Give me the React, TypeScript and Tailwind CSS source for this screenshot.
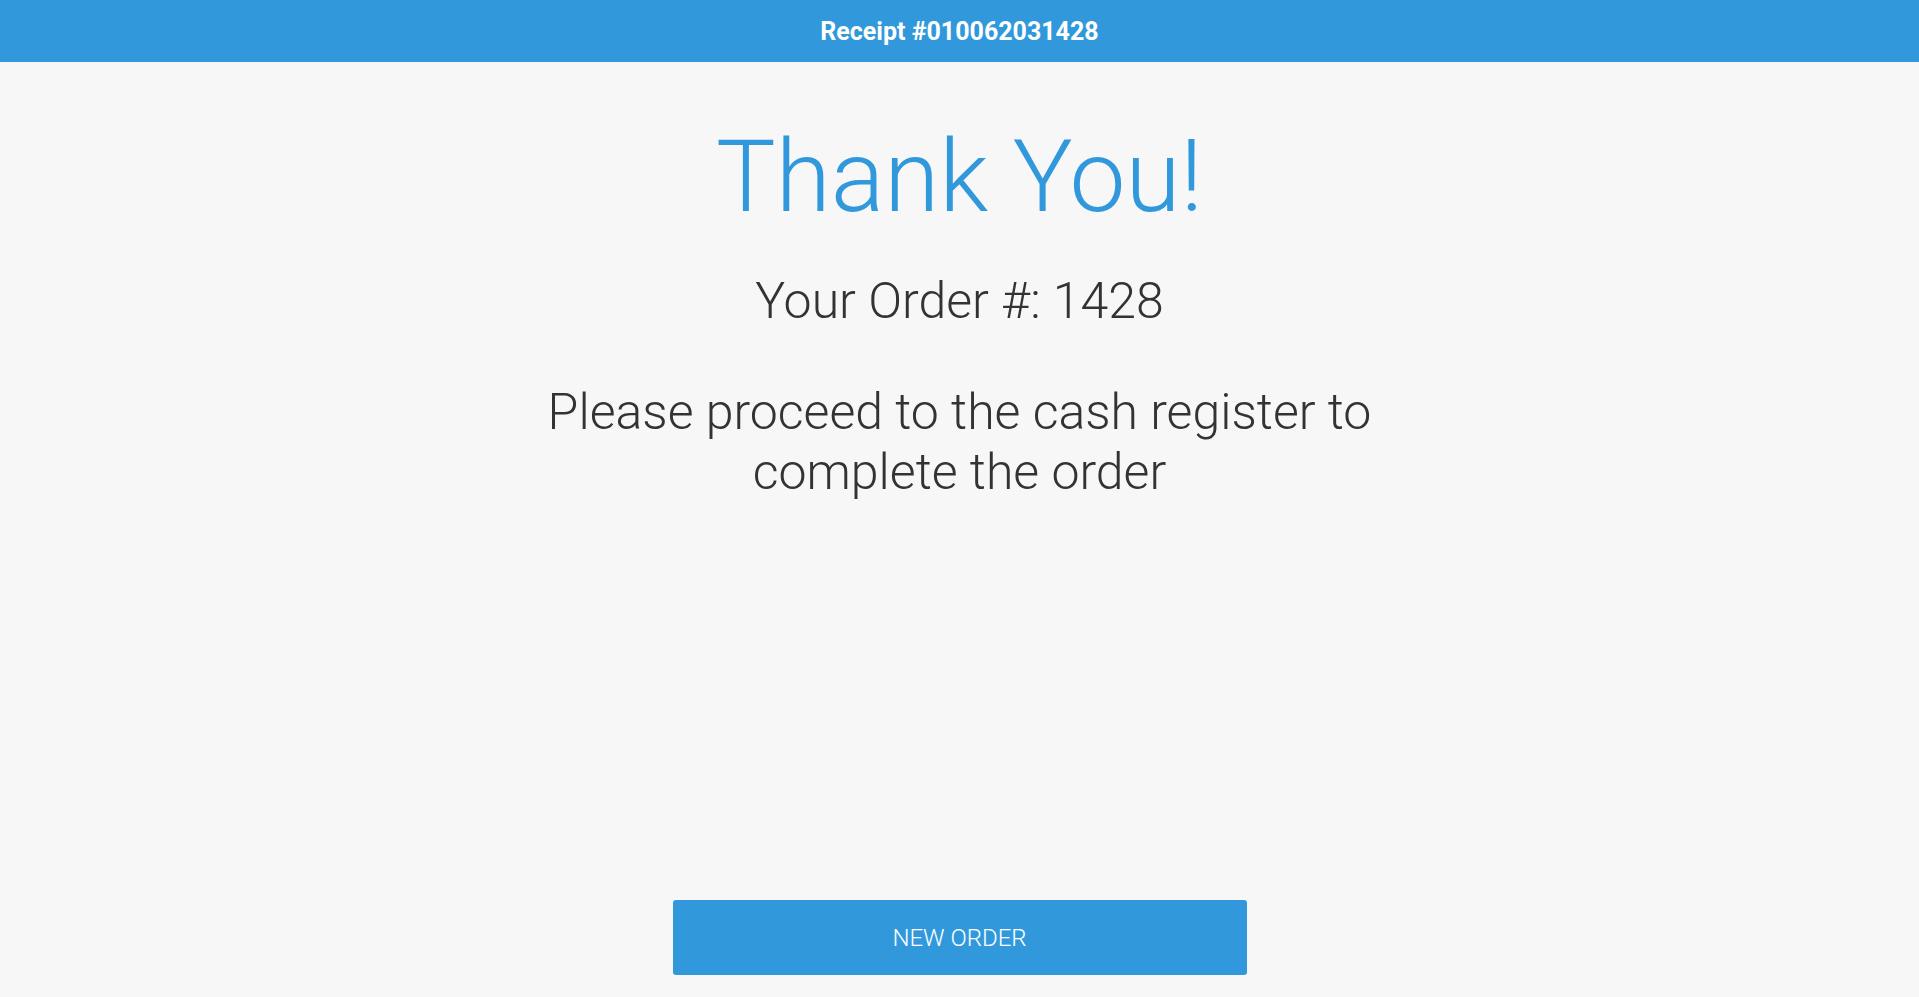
export default function App() {
  return (
    <div
      className="flex h-[997px] w-full flex-col bg-[#f7f7f7]"
      style={{ fontFamily: "Roboto, 'Noto Sans', sans-serif" }}
    >
      <header className="flex h-[62px] shrink-0 items-center justify-center bg-[#3199db]">
        <span className="text-[25px] font-bold leading-none text-white">Receipt #010062031428</span>
      </header>
      <main className="flex flex-1 flex-col items-center">
        <h1 className="mt-[55px] text-[100px] font-light leading-[120px] text-[#3199db]">Thank You!</h1>
        <p className="mt-[34px] text-[50px] font-light leading-[60px] text-[#333333]">Your Order #: 1428</p>
        <p className="mt-[51px] max-w-[900px] text-center text-[50px] font-light leading-[60px] text-[#333333]">
          Please proceed to the cash register to complete the order
        </p>
      </main>
      <div className="flex justify-center pb-[22px]">
        <button className="h-[75px] w-[574px] rounded-[3px] bg-[#3199db] text-[24px] font-light uppercase text-white">
          New Order
        </button>
      </div>
    </div>
  );
}
